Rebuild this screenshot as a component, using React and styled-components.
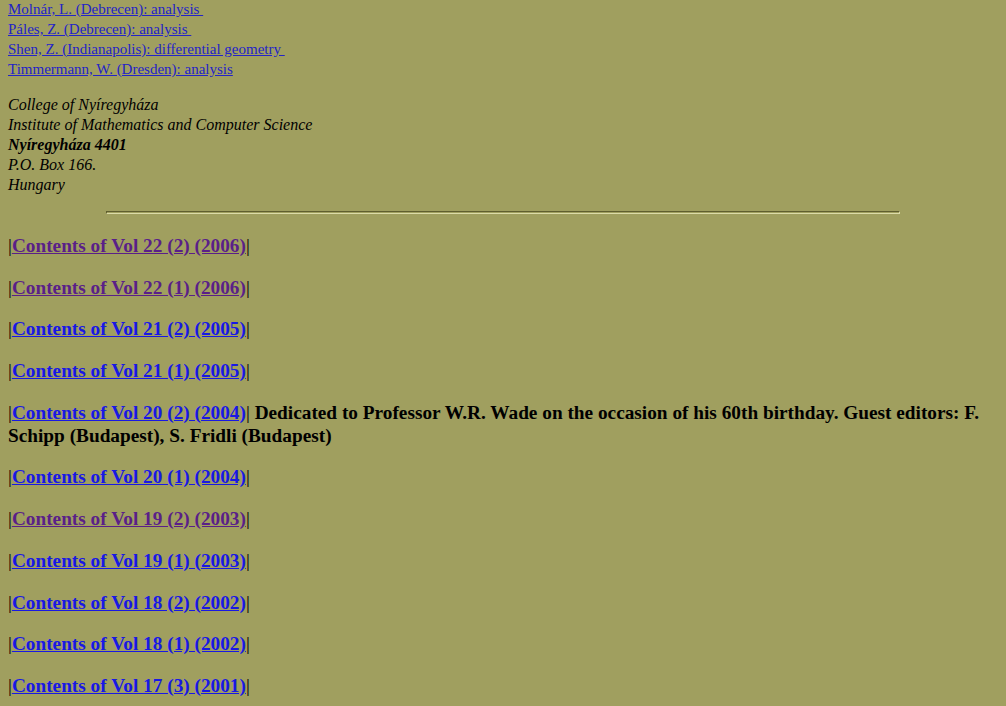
import React from 'react';
import styled, { createGlobalStyle } from "styled-components";

const GlobalStyle = createGlobalStyle`
    html, body {
        margin: 0;
        background: #a09f5f;
    }
    body {
        padding: 0 8px;
        font-family: "Liberation Serif", "Times New Roman", serif;
        color: #000;
    }
`

const editors = [
    "Molnár, L. (Debrecen): analysis ",
    "Páles, Z. (Debrecen): analysis ",
    "Shen, Z. (Indianapolis): differential geometry ",
    "Timmermann, W. (Dresden): analysis",
];

const volumes = [
    { label: "Contents of Vol 22 (2) (2006)", visited: true },
    { label: "Contents of Vol 22 (1) (2006)", visited: true },
    { label: "Contents of Vol 21 (2) (2005)" },
    { label: "Contents of Vol 21 (1) (2005)" },
    { label: "Contents of Vol 20 (2) (2004)", note: " Dedicated to Professor W.R. Wade on the occasion of his 60th birthday. Guest editors: F. Schipp (Budapest), S. Fridli (Budapest)" },
    { label: "Contents of Vol 20 (1) (2004)" },
    { label: "Contents of Vol 19 (2) (2003)", visited: true },
    { label: "Contents of Vol 19 (1) (2003)" },
    { label: "Contents of Vol 18 (2) (2002)" },
    { label: "Contents of Vol 18 (1) (2002)" },
    { label: "Contents of Vol 17 (3) (2001)" },
];

const App = () => {
    return (
        <Page>
            <GlobalStyle />
            <EditorList>
                {editors.map((e) => (
                    <EditorLink key={e} href="#">{e}</EditorLink>
                ))}
            </EditorList>
            <Address>
                <span>College of Nyíregyháza</span>
                <span>Institute of Mathematics and Computer Science</span>
                <strong>Nyíregyháza 4401</strong>
                <span>P.O. Box 166.</span>
                <span>Hungary</span>
            </Address>
            <Rule />
            {volumes.map((v) => (
                <VolumeRow key={v.label}>
                    <Bar>|</Bar><VolumeLink href="#" $visited={v.visited}>{v.label}</VolumeLink><Bar>|</Bar>
                    {v.note && <Note>{v.note}</Note>}
                </VolumeRow>
            ))}
        </Page>
    );
};

const Page = styled.div`
    padding-top: 0;
`

const EditorList = styled.div`
    display: flex;
    flex-direction: column;
    align-items: flex-start;
    margin-top: -1px;
    font-size: 15px;
    line-height: 20px;
`

const EditorLink = styled.a`
    color: #2323c8;
    text-decoration: underline;
    white-space: pre;
`

const Address = styled.address`
    display: flex;
    flex-direction: column;
    margin-top: 16px;
    font-size: 16px;
    line-height: 20px;
    font-style: italic;
    strong {
        font-weight: bold;
    }
`

const Rule = styled.hr`
    width: 80%;
    margin: 16px auto 20px;
    height: 1px;
    border: 1px solid;
    border-color: #5f5e2f #dcdba8 #dcdba8 #5f5e2f;
`

const VolumeRow = styled.p`
    margin: 0 0 18.7px;
    font-size: 19.3px;
    line-height: 23px;
    font-weight: bold;
`

const Bar = styled.span`
    font-weight: normal;
`

const VolumeLink = styled.a`
    color: ${(p) => (p.$visited ? "#5a1f88" : "#1818e4")};
    text-decoration: underline;
`

const Note = styled.span`
    color: #000;
`

export default App;
